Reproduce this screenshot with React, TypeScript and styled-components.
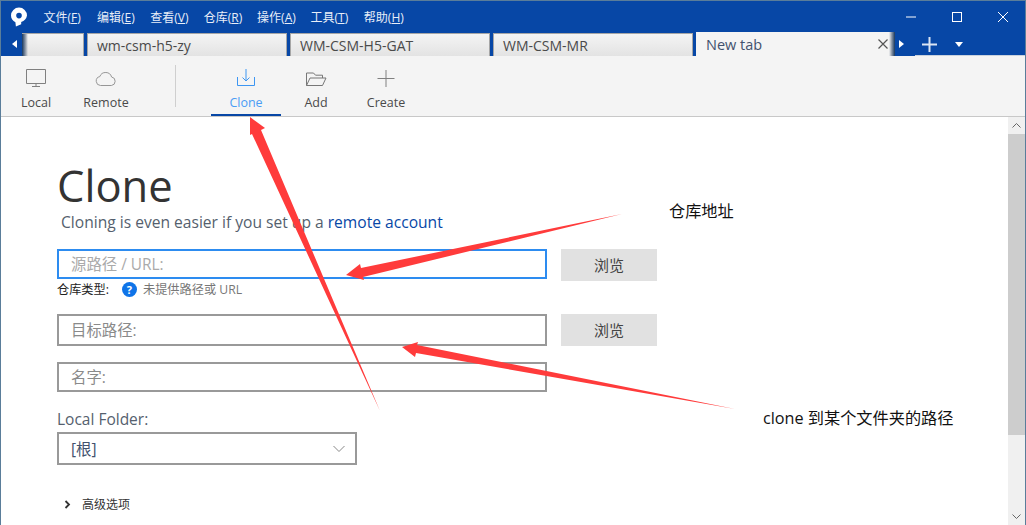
import { createGlobalStyle, styled } from "styled-components";

const GlobalStyle = createGlobalStyle`
  html, body {
    margin: 0;
    padding: 0;
    background: #fff;
  }
  body {
    font-family: "Open Sans", "Noto Sans CJK SC", sans-serif;
  }
`;

const Window = styled.div`
  position: relative;
  display: flex;
  flex-direction: column;
  width: 1026px;
  height: 525px;
  box-sizing: border-box;
  border: 1px solid #5a7d9a;
  border-bottom: 0;
  overflow: hidden;
  background: #fff;
`;

const TitleBar = styled.div`
  display: flex;
  align-items: center;
  height: 31px;
  background: #0747a6;
  color: #fff;
  flex: none;
`;

const Logo = styled.svg`
  width: 18px;
  height: 20px;
  margin-left: 9px;
  margin-right: 15.5px;
`;

const Menu = styled.div`
  display: flex;
  gap: 14px;
  font-size: 12px;
  color: #e8eef8;
`;

const MenuItem = styled.span`
  width: 39.4px;
  white-space: nowrap;
  u {
    text-underline-offset: 1px;
  }
`;

const WindowButtons = styled.div`
  display: flex;
  margin-left: auto;
  margin-right: -1px;
`;

const WindowButton = styled.div`
  display: flex;
  width: 46px;
  height: 31px;
  align-items: center;
  justify-content: center;
`;

const TabBar = styled.div`
  display: flex;
  align-items: flex-end;
  height: 24px;
  flex: none;
  background: #0747a6;
`;

const ScrollLeft = styled.div`
  display: flex;
  width: 21px;
  height: 100%;
  align-items: center;
  justify-content: center;
  padding-left: 6px;
  box-sizing: border-box;
`;

const Tab = styled.div<{ $w: number; $active?: boolean; $clipped?: boolean }>`
  position: relative;
  display: flex;
  align-items: center;
  box-sizing: border-box;
  width: ${(p) => p.$w}px;
  height: ${(p) => (p.$active ? 24 : 23)}px;
  margin-right: ${(p) => (p.$active ? 0 : 3)}px;
  padding-left: ${(p) => (p.$active ? 10 : 9)}px;
  font-size: ${(p) => (p.$active ? 14.5 : 14)}px;
  color: ${(p) => (p.$active ? "#42526e" : "#4a4a4a")};
  background: ${(p) =>
    p.$active ? "#f4f4f4" : "linear-gradient(#f4f4f4, #e3e3e3)"};
  border: ${(p) => (p.$active ? "0" : "1px solid #a6a6a6")};
  border-bottom: 0;
  border-left: ${(p) => (p.$clipped ? "0" : "")};
  white-space: nowrap;
`;

const TabFade = styled.div<{ $right?: boolean }>`
  position: absolute;
  top: 0;
  bottom: 0;
  ${(p) => (p.$right ? "right: 0;" : "left: 0;")}
  width: 6px;
  background: linear-gradient(
    ${(p) => (p.$right ? "to left" : "to right")},
    #17365d,
    #8a96a6 55%,
    transparent
  );
`;

const TabClose = styled.svg`
  position: absolute;
  right: 7px;
  top: 7px;
  width: 10px;
  height: 10px;
`;

const TabTools = styled.div`
  display: flex;
  align-items: center;
  height: 100%;
  flex: 1;
  background: linear-gradient(#c9d2de, #c9d2de) no-repeat right bottom /
    calc(100% - 20px) 1px;
`;

const ToolSlot = styled.div<{ $w: number }>`
  display: flex;
  width: ${(p) => p.$w}px;
  height: 100%;
  align-items: center;
  justify-content: center;
`;

const Toolbar = styled.div`
  display: flex;
  height: 61px;
  flex: none;
  box-sizing: border-box;
  background: #f4f4f4;
  border-bottom: 1px solid #c8c8c8;
`;

const ToolItem = styled.div<{ $active?: boolean }>`
  display: flex;
  flex-direction: column;
  align-items: center;
  box-sizing: border-box;
  width: 70px;
  height: 60px;
  padding-top: 12px;
  font-size: 12.5px;
  line-height: 17px;
  color: ${(p) => (p.$active ? "#4a9cf5" : "#4a4a4a")};
  border-bottom: 2px solid ${(p) => (p.$active ? "#0747a6" : "transparent")};
  svg {
    width: 24px;
    height: 22px;
    margin-bottom: 4px;
  }
`;

const ToolDivider = styled.div`
  width: 1px;
  height: 42px;
  margin: 9px 35px 0 34px;
  background: #cfcfcf;
`;

const Body = styled.div`
  display: flex;
  flex: 1;
  min-height: 0;
`;

const Content = styled.div`
  flex: 1;
  padding: 44px 0 0 56px;
  color: #42526e;
`;

const Title = styled.h1`
  margin: 0;
  font-size: 43.5px;
  line-height: 50px;
  font-weight: 400;
  color: #333;
`;

const Subtitle = styled.p`
  margin: 1px 0 0 4px;
  font-size: 15.6px;
  line-height: 20px;
  color: #555f6e;
  a {
    color: #0747a6;
  }
`;

const FieldRow = styled.div<{ $top: number }>`
  display: flex;
  align-items: flex-start;
  gap: 14px;
  margin-top: ${(p) => p.$top}px;
`;

const TextField = styled.div<{ $focus?: boolean; $h: number; $w?: number }>`
  display: flex;
  align-items: center;
  box-sizing: border-box;
  width: ${(p) => p.$w ?? 490}px;
  height: ${(p) => p.$h}px;
  padding: 0 12px 2px;
  font-size: 15.4px;
  color: ${(p) => (p.$focus ? "#aaa" : "#8a8a8a")};
  border: 2px solid ${(p) => (p.$focus ? "#2d8cf0" : "#999")};
`;

const BrowseButton = styled.div`
  display: flex;
  width: 96px;
  height: 32px;
  box-sizing: border-box;
  padding-bottom: 2px;
  align-items: center;
  justify-content: center;
  font-size: 15px;
  color: #444;
  background: #e1e1e1;
`;

const RepoType = styled.div`
  display: flex;
  align-items: center;
  height: 18px;
  margin-top: -1px;
  font-size: 12.2px;
  color: #222;
`;

const HelpBadge = styled.span`
  display: flex;
  width: 15px;
  height: 15px;
  margin: 0 6px 0 13px;
  align-items: center;
  justify-content: center;
  border-radius: 50%;
  font-size: 11px;
  font-weight: 700;
  color: #fff;
  background: #0f74e8;
`;

const RepoHint = styled.span`
  color: #777;
`;

const FolderLabel = styled.div`
  margin-top: 17px;
  font-size: 15.5px;
  line-height: 20px;
  color: #555f6e;
`;

const FolderSelect = styled(TextField)`
  justify-content: space-between;
  margin-top: 3px;
  padding-bottom: 0;
  color: #42526e;
  svg {
    width: 14px;
    height: 8px;
    margin-right: -3px;
  }
`;

const Advanced = styled.div`
  display: flex;
  align-items: center;
  gap: 11px;
  margin: 30px 0 0 7px;
  font-size: 12px;
  color: #333;
`;

const Scrollbar = styled.div`
  display: flex;
  flex-direction: column;
  width: 17px;
  flex: none;
  background: #f0f0f0;
`;

const ScrollCap = styled.div`
  display: flex;
  height: 17px;
  flex: none;
  align-items: center;
  justify-content: center;
`;

const ScrollThumb = styled.div`
  height: 301px;
  background: #cdcdcd;
`;

const ScrollSpace = styled.div`
  flex: 1;
`;

const ArrowLayer = styled.svg`
  position: absolute;
  left: -1px;
  top: -1px;
  width: 1026px;
  height: 525px;
  pointer-events: none;
`;

const Note = styled.span<{ $x: number; $y: number }>`
  position: absolute;
  left: ${(p) => p.$x - 1}px;
  top: ${(p) => p.$y - 2}px;
  font-size: 16.2px;
  line-height: 20px;
  color: #111;
  white-space: nowrap;
`;

const menus: [string, string][] = [
  ["文件", "F"],
  ["编辑", "E"],
  ["查看", "V"],
  ["仓库", "R"],
  ["操作", "A"],
  ["工具", "T"],
  ["帮助", "H"],
];

const App = () => {
  return (
    <Window>
      <GlobalStyle />
      <TitleBar>
        <Logo viewBox="0 0 18 20">
          <path
            fill="#fff"
            fillRule="evenodd"
            d="M9 .6a8 8 0 0 0-8 8c0 3 1.8 5.4 4.4 6.6l.5 4.4 5.3-2.4v-2.3a8 8 0 0 0 5.8-6.3A8 8 0 0 0 9 .6zm0 5.2a2.8 2.8 0 1 1 0 5.6 2.8 2.8 0 0 1 0-5.6z"
          />
        </Logo>
        <Menu>
          {menus.map(([name, key]) => (
            <MenuItem key={key}>
              {name}(<u>{key}</u>)
            </MenuItem>
          ))}
        </Menu>
        <WindowButtons>
          <WindowButton>
            <svg width="12" height="12" viewBox="0 0 12 12">
              <path d="M1 6h10" stroke="#fff" fill="none" />
            </svg>
          </WindowButton>
          <WindowButton>
            <svg width="12" height="12" viewBox="0 0 12 12">
              <rect x="1.5" y="1.5" width="9" height="9" stroke="#fff" fill="none" />
            </svg>
          </WindowButton>
          <WindowButton>
            <svg width="12" height="12" viewBox="0 0 12 12">
              <path d="M1 1l10 10M11 1L1 11" stroke="#fff" fill="none" />
            </svg>
          </WindowButton>
        </WindowButtons>
      </TitleBar>

      <TabBar>
        <ScrollLeft>
          <svg width="6" height="8" viewBox="0 0 6 8">
            <path d="M5 0v8L0 4z" fill="#fff" />
          </svg>
        </ScrollLeft>
        <Tab $w={62} $clipped>
          <TabFade />
        </Tab>
        <Tab $w={200}>wm-csm-h5-zy</Tab>
        <Tab $w={200}>WM-CSM-H5-GAT</Tab>
        <Tab $w={200}>WM-CSM-MR</Tab>
        <Tab $w={199} $active>
          New tab
          <TabClose viewBox="0 0 10 10">
            <path d="M.5.5l9 9M9.5.5l-9 9" stroke="#555" strokeWidth="1.2" fill="none" />
          </TabClose>
          <TabFade $right />
        </Tab>
        <TabTools>
          <ToolSlot $w={13}>
            <svg width="5" height="8" viewBox="0 0 5 8">
              <path d="M0 0v8l5-4z" fill="#fff" />
            </svg>
          </ToolSlot>
          <ToolSlot $w={43}>
            <svg width="15" height="15" viewBox="0 0 15 15">
              <path d="M7.5 0v15M0 7.5h15" stroke="#dbe5f3" strokeWidth="2" fill="none" />
            </svg>
          </ToolSlot>
          <ToolSlot $w={16}>
            <svg width="8" height="5" viewBox="0 0 8 5">
              <path d="M0 0h8L4 5z" fill="#fff" />
            </svg>
          </ToolSlot>
        </TabTools>
      </TabBar>

      <Toolbar>
        <ToolItem>
          <svg viewBox="0 0 24 22">
            <path
              d="M2.5 1.5h19v14h-19zM12 15.5v3M8 18.5h8"
              fill="none"
              stroke="#808080"
            />
          </svg>
          Local
        </ToolItem>
        <ToolItem>
          <svg viewBox="0 0 24 22">
            <path
              d="M6.5 17.5a4.5 4.5 0 0 1-.7-8.9 6.2 6.2 0 0 1 11.8.4 4.3 4.3 0 0 1-.2 8.5z"
              fill="none"
              stroke="#969696"
            />
          </svg>
          Remote
        </ToolItem>
        <ToolDivider />
        <ToolItem $active>
          <svg viewBox="0 0 24 22">
            <path
              d="M12 1v12M8.5 9.5l3.5 3.5 3.5-3.5M3.5 9v8.5h17V9"
              fill="none"
              stroke="#3d96f2"
            />
          </svg>
          Clone
        </ToolItem>
        <ToolItem>
          <svg viewBox="0 0 24 22">
            <path
              d="M2.5 17.5V5h7l2 2.2h7V10M2.5 17.5L6 10h16l-3.5 7.5z"
              fill="none"
              stroke="#777"
            />
          </svg>
          Add
        </ToolItem>
        <ToolItem>
          <svg viewBox="0 0 24 22">
            <path d="M12 2v17M3.5 10.5h17" fill="none" stroke="#808080" />
          </svg>
          Create
        </ToolItem>
      </Toolbar>

      <Body>
        <Content>
          <Title>Clone</Title>
          <Subtitle>
            Cloning is even easier if you set up a <a>remote account</a>
          </Subtitle>
          <FieldRow $top={17}>
            <TextField $focus $h={30}>
              源路径 / URL:
            </TextField>
            <BrowseButton>浏览</BrowseButton>
          </FieldRow>
          <RepoType>
            仓库类型:
            <HelpBadge>?</HelpBadge>
            <RepoHint>未提供路径或 URL</RepoHint>
          </RepoType>
          <FieldRow $top={16}>
            <TextField $h={32}>目标路径:</TextField>
            <BrowseButton>浏览</BrowseButton>
          </FieldRow>
          <FieldRow $top={16}>
            <TextField $h={30}>名字:</TextField>
          </FieldRow>
          <FolderLabel>Local Folder:</FolderLabel>
          <FolderSelect $h={33} $w={300}>
            [根]
            <svg viewBox="0 0 14 8">
              <path d="M1.5 1l5.5 5.5L12.5 1" fill="none" stroke="#888" />
            </svg>
          </FolderSelect>
          <Advanced>
            <svg width="7" height="9" viewBox="0 0 7 9">
              <path d="M1.5 1l3.5 3.5L1.5 8" fill="none" stroke="#333" strokeWidth="1.8" />
            </svg>
            高级选项
          </Advanced>
        </Content>
        <Scrollbar>
          <ScrollCap>
            <svg width="9" height="5" viewBox="0 0 9 5">
              <path d="M.5 4.5l4-4 4 4" fill="none" stroke="#666" />
            </svg>
          </ScrollCap>
          <ScrollThumb />
          <ScrollSpace />
          <ScrollCap>
            <svg width="9" height="5" viewBox="0 0 9 5">
              <path d="M.5.5l4 4 4-4" fill="none" stroke="#666" />
            </svg>
          </ScrollCap>
        </Scrollbar>
      </Body>

      {/* red annotations drawn over the screenshot */}
      <ArrowLayer viewBox="0 0 1026 525">
        <path fill="#ff3b3b" d="M250 117L265 128L261 130L380 411L252 134L250 135z" />
        <path fill="#ff3b3b" d="M622 214L361 268L360 264L346 275L364 280L363 277z" />
        <path fill="#ff3b3b" d="M735 409L417 345L418 342L402 347L415 357L416 353z" />
      </ArrowLayer>
      <Note $x={669} $y={202}>仓库地址</Note>
      <Note $x={763} $y={409}>clone 到某个文件夹的路径</Note>
    </Window>
  );
};

export default App;
